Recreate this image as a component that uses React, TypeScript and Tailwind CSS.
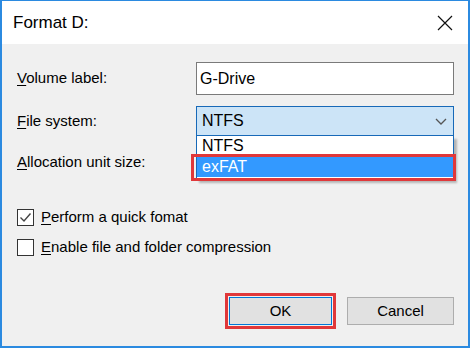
import { ReactNode } from 'react'

const font = { fontFamily: '"Liberation Sans", Arial, sans-serif' }

function Acc({ ch }: { ch: string }) {
  return <span className="underline underline-offset-2 decoration-1">{ch}</span>
}

function CheckRow({ checked, children }: { checked?: boolean; children: ReactNode }) {
  return (
    <div className="flex items-center h-[18px]">
      <div className="w-[17px] h-[17px] border border-[#333] bg-white flex items-center justify-center">
        {checked && (
          <svg width="13" height="13" viewBox="0 0 13 13">
            <path d="M1.5 6.5 L5 10 L11.5 2.5" fill="none" stroke="#444" strokeWidth="1.4" />
          </svg>
        )}
      </div>
      <span className="ml-[7px] text-[15px] text-black">{children}</span>
    </div>
  )
}

export default function App() {
  return (
    <div className="w-[472px] h-[348px] bg-white" style={font}>
      <div className="w-[470px] h-[348px] border-2 border-t border-[#2b8ae0] flex flex-col">
        {/* title bar */}
        <div className="h-[43px] bg-white flex items-center justify-between pl-[11px] pr-[15px] shrink-0">
          <span className="text-[17px] text-black">Format D:</span>
          <svg width="16" height="16" viewBox="0 0 16 16">
            <path d="M1 1 L15 15 M15 1 L1 15" stroke="#111" strokeWidth="1.2" />
          </svg>
        </div>

        {/* body */}
        <div className="flex-1 bg-[#f0f0f0] relative pl-[15px] text-[15px] text-black">
          <div className="grid grid-cols-[179px_258px] items-center mt-[18px] h-[33px]">
            <span><Acc ch="V" />olume label:</span>
            <div className="h-[33px] border border-[#7a7a7a] bg-white flex items-center pl-[3px] text-[16px]">G-Drive</div>
          </div>

          <div className="grid grid-cols-[179px_258px] items-center mt-[11px] h-[30px]">
            <span><Acc ch="F" />ile system:</span>
            <div className="h-[30px] border border-[#1769b8] bg-[#cce4f7] flex items-center justify-between pl-[5px] pr-[6px] text-[16px]">
              <span>NTFS</span>
              <svg width="12" height="7" viewBox="0 0 12 7">
                <path d="M1 1 L6 6 L11 1" fill="none" stroke="#555" strokeWidth="1.3" />
              </svg>
            </div>
          </div>

          <div className="grid grid-cols-[179px_258px] items-center mt-[11px] h-[30px]">
            <span><Acc ch="A" />llocation unit size:</span>
            <div />
          </div>

          {/* dropdown list */}
          <div className="absolute left-[194px] top-[92px] w-[258px] h-[44px] bg-white border border-t-0 border-[#1769b8] shadow-[3px_3px_2px_rgba(0,0,0,0.25)] text-[16px]">
            <div className="h-[20px] pl-[5px] leading-[20px]">NTFS</div>
            <div className="h-[21px] pl-[5px] leading-[21px] bg-[#3399ff] text-white">exFAT</div>
          </div>
          <div className="absolute left-[189px] top-[110px] w-[265px] h-[27px] border-[3px] border-[#e0383a]" />

          <div className="mt-[31px]">
            <CheckRow checked><Acc ch="P" />erform a quick fomat</CheckRow>
          </div>
          <div className="mt-[12px]">
            <CheckRow><Acc ch="E" />nable file and folder compression</CheckRow>
          </div>

          <div className="flex justify-end gap-[15px] mt-[41px] pr-[14px]">
            <div className="relative">
              <button className="w-[103px] h-[28px] bg-[#e1e1e1] border border-[#0078d7] text-[15px]">OK</button>
              <div className="absolute -inset-[4px] border-[3px] border-[#e0383a]" />
            </div>
            <button className="w-[107px] h-[28px] bg-[#e1e1e1] border border-[#adadad] text-[15px]">Cancel</button>
          </div>
        </div>
      </div>
    </div>
  )
}
